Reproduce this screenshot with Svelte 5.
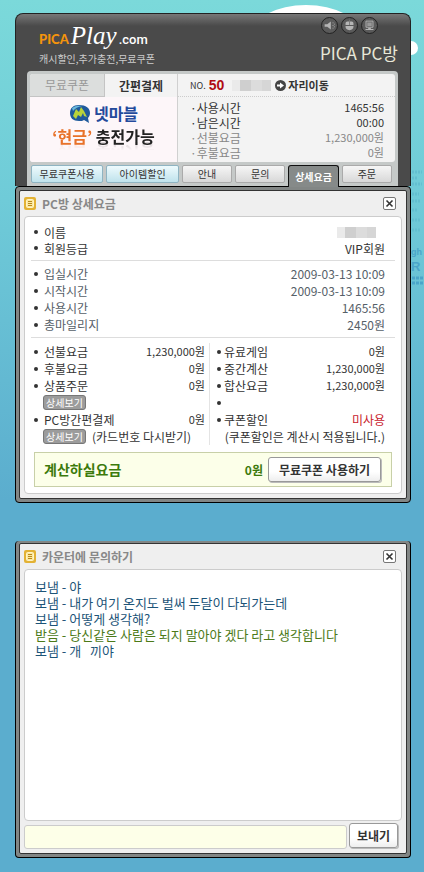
<script lang="ts">
	type Row = { label: string; value?: string; alert?: boolean };

	const usage: Row[] = [
		{ label: "사용시간", value: "1465:56" },
		{ label: "남은시간", value: "00:00" },
		{ label: "선불요금", value: "1,230,000원" },
		{ label: "후불요금", value: "0원" },
	];

	const times: Row[] = [
		{ label: "입실시간", value: "2009-03-13 10:09" },
		{ label: "시작시간", value: "2009-03-13 10:09" },
		{ label: "사용시간", value: "1465:56" },
		{ label: "총마일리지", value: "2450원" },
	];

	const prepaid: Row[] = [
		{ label: "선불요금", value: "1,230,000원" },
		{ label: "후불요금", value: "0원" },
		{ label: "상품주문", value: "0원" },
	];

	const charges: Row[] = [
		{ label: "유료게임", value: "0원" },
		{ label: "중간계산", value: "1,230,000원" },
		{ label: "합산요금", value: "1,230,000원" },
		{ label: "" },
		{ label: "쿠폰할인", value: "미사용", alert: true },
	];

	const menu = ["무료쿠폰사용", "아이템할인", "안내", "문의", "상세요금", "주문"];
	let current = $state("상세요금");

	let messages = $state([
		{ from: "보냄", text: "야" },
		{ from: "보냄", text: "내가 여기 온지도 벌써 두달이 다되가는데" },
		{ from: "보냄", text: "어떻게 생각해?" },
		{ from: "받음", text: "당신같은 사람은 되지 말아야 겠다 라고 생각합니다" },
		{ from: "보냄", text: "개   끼야" },
	]);
	let draft = $state("");
	let billOpen = $state(true);
	let chatOpen = $state(true);

	function send(e: SubmitEvent) {
		e.preventDefault();
		if (!draft.trim()) return;
		messages.push({ from: "보냄", text: draft });
		draft = "";
	}
</script>

{#snippet titlebar(title: string, close: () => void)}
	<div class="titlebar">
		<svg class="note" viewBox="0 0 12 13" aria-hidden="true">
			<rect width="12" height="13" rx="2" fill="#e3b234" />
			<rect x="2.5" y="2.5" width="7" height="8" rx="1" fill="#fbe9a0" stroke="#fff3c4" />
			<path d="M4 4.5h4M4 6.5h4M4 8.5h4" stroke="#b98a1c" />
		</svg>
		<h2>{title}</h2>
		<button class="close" aria-label="닫기" onclick={close}>
			<svg viewBox="0 0 11 11"><path d="M2.500 2.500l6 6M8.500 2.500l-6 6" stroke="#333" stroke-width="1.6" /></svg>
		</button>
	</div>
{/snippet}

{#snippet rows(items: Row[])}
	{#each items as row}
		<li>
			<span>{row.label}</span>
			<span class="value" class:alert={row.alert}>{row.value}</span>
		</li>
	{/each}
{/snippet}

<svg class="backdrop" width="424" height="300" viewBox="0 0 424 300" aria-hidden="true">
	<ellipse cx="306" cy="34" rx="54" ry="29" fill="#fff" />
	<circle cx="411" cy="48" r="7" fill="#fff" />
	<g fill="#4aa5c9" font-family="Liberation Sans" font-weight="700">
		<text x="411" y="255" font-size="9">gh</text>
		<text x="411" y="271" font-size="13">R</text>
	</g>
	<path d="M412 172h10M412 178h6M412 184h10M412 194h7M412 201h9M412 210h6M412 220h8M412 230h9" stroke="#63bfd0" stroke-width="3" stroke-dasharray="2 1" />
	<path d="M412 278h12M412 283h12" stroke="#4aa5c9" stroke-width="3" stroke-dasharray="3 1" />
</svg>

<main>
	<header>
		<div class="brand">
			<div>
				<h1><b>PICA</b><i>Play</i><span>.com</span></h1>
				<p>캐시할인,추가충전,무료쿠폰</p>
			</div>
			<div class="shop">
				<div class="tools">
					<button aria-label="소리">
						<svg viewBox="0 0 17 17"><path d="M3 7h3l4-3v9l-4-3H3z" fill="#b5b5b5" /><path d="M12.5 5v1M12.5 8v1M12.5 11v1M14 6.5v1M14 9.5v1" stroke="#b5b5b5" /></svg>
					</button>
					<button aria-label="마우스">
						<svg viewBox="0 0 17 17"><path d="M4 8V6q0-2 2-2h5q2 0 2 2v2zM4 9h9v1q0 3-4.500 4Q4 13 4 10z" fill="#b5b5b5" /><path d="M8.500 2v6" stroke="#777" /></svg>
					</button>
					<button aria-label="화면">
						<svg viewBox="0 0 17 17"><path d="M4.500 3.500h8v7h-8z" fill="#666" stroke="#b5b5b5" /><path d="M6 5h5v4H6z" fill="#999" /><path d="M7 11h3v1.500h3v1H4v-1h3z" fill="#b5b5b5" /></svg>
					</button>
				</div>
				<strong>PICA PC방</strong>
			</div>
		</div>

		<div class="card">
			<div class="summary">
				<div class="promo">
					<div class="promo-tabs">
						<button>무료쿠폰</button>
						<button class="on">간편결제</button>
					</div>
					<a class="banner" href="#charge">
						<span class="netmarble">
							<svg viewBox="0 0 22 20" aria-hidden="true">
								<path d="M10 1C4 1 1 4 1 9s3 8 9 8c2 0 4 0 5-1l5 3-1-5c1-1 2-3 2-5 0-5-4-8-11-8z" fill="#1f5a9c" />
								<path d="M3 4q4-3 10-2-6 1-9 5z" fill="#6bb9dd" />
								<path d="M4 12l3-7 3 3 2-5 3 4 3 6-3-1-1-3-2 4-3-2-2 4z" fill="#b9d43a" />
							</svg>
							넷마블
						</span>
						<span class="cash"><em>‘현금’</em> 충전가능</span>
					</a>
				</div>
				<div class="seat">
					<div class="seat-no">
						<small>NO.</small>
						<b>50</b>
						<span class="mosaic"></span>
						<button>
							<svg viewBox="0 0 11 11" aria-hidden="true"><circle cx="5.500" cy="5.500" r="5.500" fill="#444" /><path d="M2 4.500h3V2.500L9 5.500 5 8.500v-2H2z" fill="#fff" /></svg>
							자리이동
						</button>
					</div>
					<ul>{@render rows(usage)}</ul>
				</div>
			</div>
			<nav>
				{#each menu as item, i}
					<button class:blue={i < 2} class:current={item === current} onclick={() => (current = item)}>{item}</button>
				{/each}
			</nav>
		</div>
	</header>

	{#if billOpen}
		<section class="window bill">
			<div class="inner">
				{@render titlebar("PC방 상세요금", () => (billOpen = false))}
				<div class="sheet">
					<ul class="who">
						<li><span>이름</span><span class="mosaic"></span></li>
						<li><span>회원등급</span><span class="value">VIP회원</span></li>
					</ul>
					<ul class="times">{@render rows(times)}</ul>
					<div class="columns">
						<ul>
							{@render rows(prepaid)}
							<li class="sub"><button>상세보기</button></li>
							<li><span>PC방간편결제</span><span class="value">0원</span></li>
							<li class="sub"><button>상세보기</button><span>(카드번호 다시받기)</span></li>
						</ul>
						<ul class="right">
							{@render rows(charges)}
							<li class="sub hint">(쿠폰할인은 계산시 적용됩니다.)</li>
						</ul>
					</div>
					<div class="total">
						<strong>계산하실요금</strong>
						<b>0원</b>
						<button class="push">무료쿠폰 사용하기</button>
					</div>
				</div>
			</div>
		</section>
	{/if}

	{#if chatOpen}
		<section class="window chat">
			<div class="inner">
				{@render titlebar("카운터에 문의하기", () => (chatOpen = false))}
				<div class="log">
					{#each messages as message}
						<p class:received={message.from === "받음"}>{message.from} - {message.text}</p>
					{/each}
				</div>
				<form onsubmit={send}>
					<input type="text" aria-label="문의 내용" bind:value={draft} />
					<button class="push">보내기</button>
				</form>
			</div>
		</section>
	{/if}
</main>

<style>
	:global(body) {
		min-height: 100vh;
		background: #5badce linear-gradient(#7bd9da, #6fcbd8 200px, #5badce 500px) no-repeat;
	}

	main,
	button,
	input {
		font-family: "Noto Sans CJK KR", sans-serif;
		font-size: 12px;
	}

	main {
		position: relative;
		padding: 13px 13px 14px 15px;
		line-height: 17px;
		color: #333;
	}

	.backdrop {
		position: absolute;
		top: 0;
		right: 0;
	}

	h1,
	h2,
	p,
	ul {
		margin: 0;
		padding: 0;
	}

	ul {
		list-style: none;
	}

	button {
		margin: 0;
		padding: 0;
		border: 0;
		background: none;
		color: inherit;
		line-height: 16px;
		white-space: nowrap;
		cursor: pointer;
	}

	svg {
		display: block;
	}

	/* header */
	header {
		padding: 0 12px 0 11px;
		border: 1px solid #222;
		border-bottom: 0;
		border-radius: 8px 8px 0 0;
		background: linear-gradient(#777, #4a4a4a 12px);
	}

	.brand {
		display: flex;
		justify-content: space-between;
		height: 57px;
		padding-left: 12px;
		color: #fff;
	}

	h1 {
		display: flex;
		align-items: baseline;
		gap: 2px;
		padding-top: 10px;
		font-weight: 400;
		line-height: 24px;
	}

	h1 b {
		color: #f4940c;
		font: 900 13px/24px Lato, sans-serif;
	}

	h1 i {
		font: italic 400 25px/24px "Liberation Serif", serif;
	}

	h1 span {
		font: 500 13px/24px Roboto, sans-serif;
	}

	.brand p {
		font-size: 10px;
		line-height: 14px;
		color: #ccc;
	}

	.shop {
		display: flex;
		flex-direction: column;
		align-items: flex-end;
	}

	.tools {
		display: flex;
		gap: 3px;
		padding: 3px 20px 8px 0;
	}

	.tools svg {
		width: 15px;
		height: 15px;
		border: 1px solid #222;
		border-radius: 50%;
		background: #5a5a5a;
	}

	.shop strong {
		font-size: 17px;
		font-weight: 400;
		line-height: 22px;
		color: #e8e8d8;
	}

	.card {
		padding: 3px 3px 0;
		border-radius: 4px 4px 0 0;
		background: #c5c9c8;
	}

	.summary {
		display: grid;
		grid-template-columns: 148px 1fr;
		height: 88px;
		border-radius: 3px;
		background: #f3f3f3;
		overflow: hidden;
	}

	.promo {
		border-right: 1px solid #d0d0d0;
	}

	.promo-tabs {
		display: grid;
		grid-template-columns: 75px 1fr;
	}

	.promo-tabs button {
		height: 23px;
		border: solid #c4c4c4;
		border-width: 0 1px 1px 0;
		background: #dcdedd;
		color: #999;
	}

	.promo-tabs .on {
		border: 0;
		background: none;
		color: #333;
		font-weight: 700;
	}

	.banner {
		display: flex;
		flex-direction: column;
		align-items: center;
		height: 65px;
		padding-top: 5px;
		background: #fdf6f9;
		color: #222;
		font-size: 16px;
		font-weight: 700;
		line-height: 23px;
		text-decoration: none;
	}

	.netmarble {
		display: flex;
		align-items: center;
		gap: 3px;
		color: #234a9c;
	}

	.netmarble svg {
		width: 22px;
		height: 20px;
	}

	.cash {
		-webkit-box-reflect: below -9px linear-gradient(transparent 50%, rgb(0 0 0 / 0.25));
	}

	.cash em {
		color: #e8722a;
		font-style: normal;
	}

	.seat-no {
		display: flex;
		align-items: center;
		height: 22px;
		padding-left: 12px;
		border-bottom: 1px dotted #ccc;
	}

	.seat-no small {
		margin-right: 3px;
		font-size: 9px;
	}

	.seat-no b {
		color: #b00c14;
		font: 700 14px/20px "Liberation Sans", sans-serif;
	}

	.mosaic {
		width: 39px;
		height: 11px;
		background: linear-gradient(90deg, #eaeaea 8px, #cfcfcf 8px 19px, #dcdcdc 19px 30px, #d6d6d6 30px);
	}

	.seat-no .mosaic {
		margin: 0 4px 0 8px;
	}

	.seat-no button {
		display: flex;
		align-items: center;
		gap: 2px;
		font-size: 11px;
		font-weight: 700;
	}

	.seat-no svg {
		width: 11px;
		height: 11px;
	}

	.seat ul {
		padding: 3px 11px 0 12px;
	}

	.seat li {
		display: flex;
		justify-content: space-between;
		line-height: 15px;
	}

	.seat li:nth-child(n + 3) {
		color: #888;
	}

	.seat li span:first-child::before {
		content: "·";
	}

	.seat .value {
		font-size: 11px;
	}

	nav {
		display: grid;
		grid-template-columns: 72fr 72fr 50fr 50fr 50fr 50fr;
		gap: 3px;
		height: 24px;
		padding: 0 3px 0 1px;
	}

	nav button {
		height: 18px;
		margin-top: 3px;
		border: 1px solid #aaa;
		border-radius: 2px;
		background: linear-gradient(#f6f6f6, #d8d8d8);
		font-size: 10px;
	}

	nav .blue {
		border-color: #8fb4c2;
		background: linear-gradient(#eefafd, #bfe2ec);
	}

	/* the open tab runs into the frame of the window below it */
	nav .current {
		position: relative;
		z-index: 1;
		height: 22px;
		border-color: #111;
		border-bottom: 0;
		border-radius: 3px 3px 0 0;
		background: #868a89;
		color: #fff;
		font-weight: 700;
	}

	/* windows */
	.window {
		padding: 3px;
		border: 1px solid #000;
		border-radius: 4px;
		background: #828685;
	}

	.inner {
		padding: 0 4px 4px;
		border: 1px solid #333;
		border-radius: 2px;
		background: #efefef;
	}

	.titlebar {
		display: flex;
		align-items: center;
		height: 25px;
		padding-right: 6px;
	}

	.note {
		width: 12px;
		height: 13px;
	}

	h2 {
		flex: 1;
		padding-left: 6px;
		font-size: 12px;
		font-weight: 700;
		color: #888;
	}

	.close {
		width: 13px;
		height: 13px;
		border: 1px solid #777;
		border-radius: 2px;
		background: #fff;
	}

	.sheet,
	.log {
		border: 1px solid #ccc;
		border-radius: 4px;
		background: #fff;
	}

	.sheet {
		padding: 7px 6px 6px;
	}

	.sheet li {
		display: flex;
		align-items: center;
		justify-content: space-between;
		height: 17px;
	}

	.sheet li::before {
		content: "";
		width: 4px;
		height: 4px;
		margin-right: 6px;
		border-radius: 50%;
		background: #333;
	}

	.sheet li > span:first-child {
		flex: 1;
	}

	.sheet .sub::before {
		display: none;
	}

	.who,
	.times {
		padding: 4px 10px 4px 3px;
		border-bottom: 1px solid #ddd;
	}

	.who {
		padding-top: 0;
	}

	.sheet .who li {
		height: 16px;
	}

	.who .mosaic {
		margin-right: 9px;
	}

	.times {
		color: #566068;
	}

	.columns {
		display: grid;
		grid-template-columns: 176px 1fr;
		padding: 5px 10px 7px 3px;
	}

	.columns ul:first-child {
		padding-right: 4px;
		border-right: 1px solid #e4e4e4;
	}

	.columns .right {
		padding-left: 7px;
	}

	.sheet .right li::before {
		margin-right: 3px;
	}

	.columns .value {
		font-size: 11px;
	}

	.columns .value.alert {
		color: #c8202c;
		font-size: 12px;
	}

	.sheet .sub {
		justify-content: flex-start;
		gap: 6px;
		padding-left: 9px;
	}

	.sheet .hint {
		justify-content: flex-end;
		padding-left: 0;
		white-space: nowrap;
	}

	.sub button {
		width: 43px;
		height: 15px;
		border: 1px solid #777;
		border-radius: 3px;
		background: #9c9c9c;
		color: #fff;
		font-size: 10px;
		line-height: 12px;
	}

	.total {
		display: flex;
		align-items: center;
		height: 33px;
		margin: 0 3px;
		padding: 0 10px 0 9px;
		border: 1px solid #c8d0a8;
		background: #fcffe9;
		color: #3c7a0c;
	}

	.total strong {
		flex: 1;
		font-size: 14px;
	}

	.total b {
		margin-right: 5px;
	}

	.push {
		height: 25px;
		padding: 0 7px;
		border: 1px solid #999;
		border-radius: 3px;
		background: linear-gradient(#fff 60%, #eee);
		box-shadow: 1px 1px 0 #bbb;
		color: #333;
		font-weight: 700;
	}

	.total .push {
		padding: 0 10px;
	}

	/* counter chat */
	.chat {
		margin-top: 38px;
		border-top: 0;
		padding-top: 2px;
	}

	.log {
		min-height: 233px;
		padding: 9px 10px 8px;
		font-size: 13px;
		line-height: 16px;
		color: #1c5478;
		white-space: pre-wrap;
	}

	.log .received {
		color: #4c7a18;
	}

	form {
		display: flex;
		gap: 2px;
		padding: 2px 4px 0 0;
	}

	input {
		flex: 1;
		min-width: 0;
		height: 24px;
		margin-top: 2px;
		padding: 0 6px;
		box-sizing: border-box;
		border: 1px solid #ccc;
		border-radius: 3px;
		background: #fdffe8;
	}
</style>
